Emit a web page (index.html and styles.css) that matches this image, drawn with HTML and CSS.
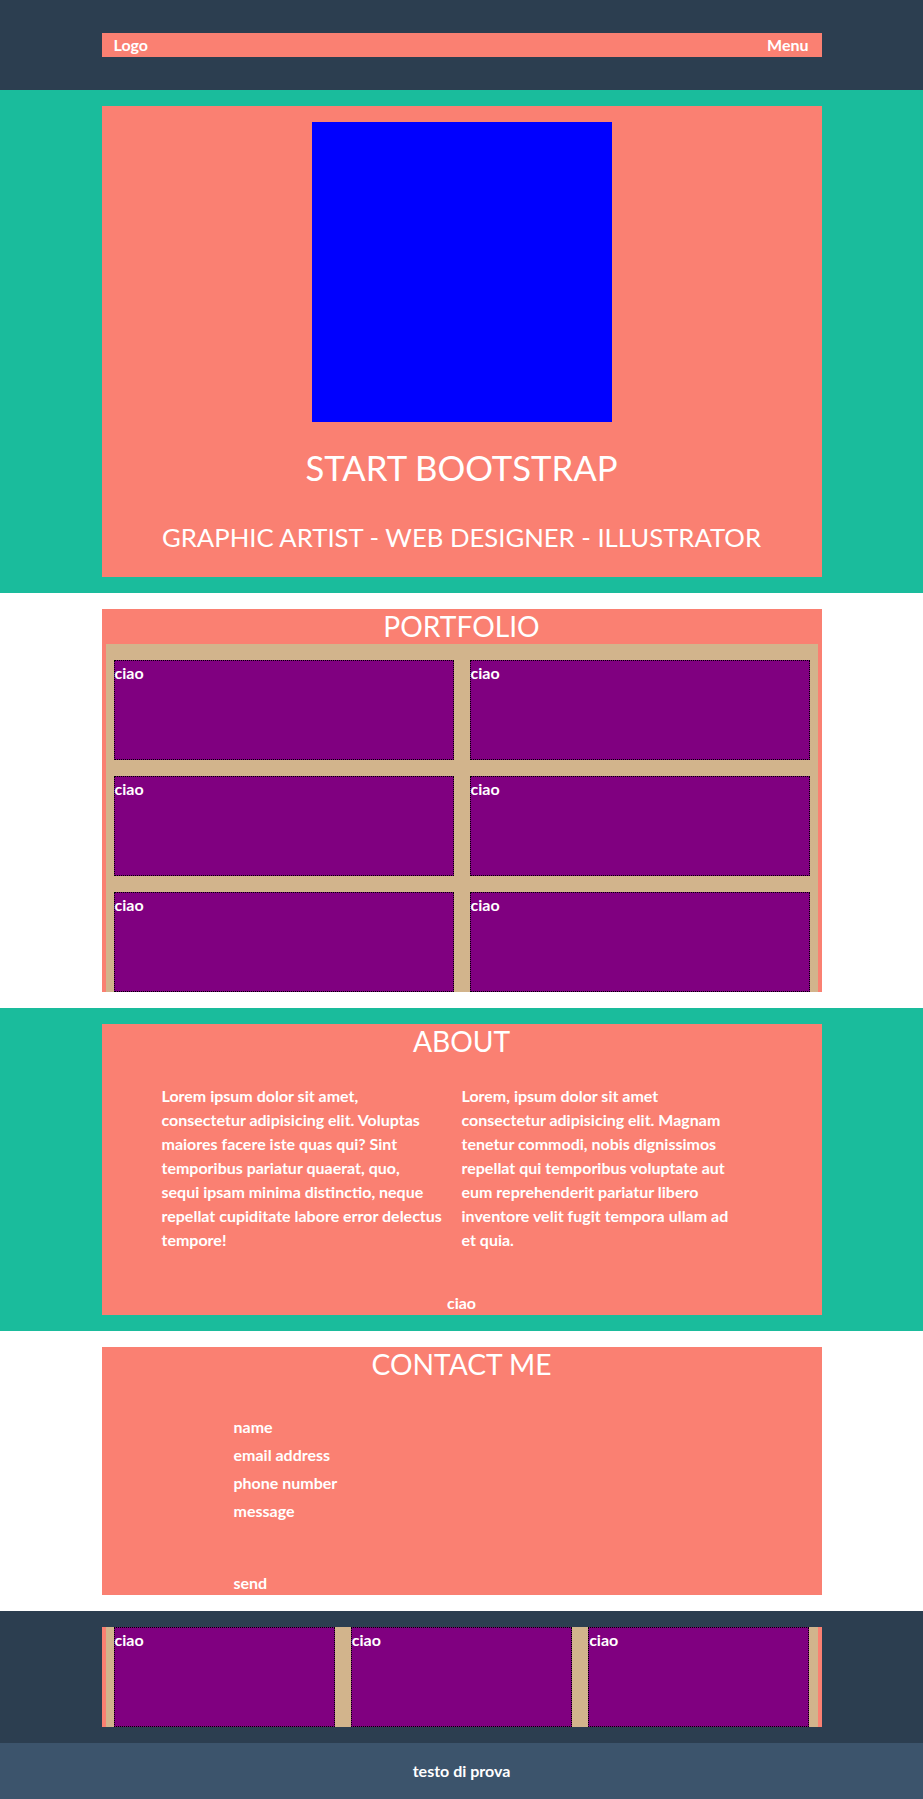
FILE: index.html
```html
<!DOCTYPE html>
<html lang="it">
<head>
<meta charset="utf-8">
<title>Start Bootstrap</title>
<link rel="stylesheet" href="styles.css">
</head>
<body>
<header class="site-header">
  <div class="container">
    <nav class="navbar">
      <span class="brand">Logo</span>
      <span class="menu">Menu</span>
    </nav>
  </div>
</header>

<section class="band band-teal">
  <div class="container box hero-box">
    <div class="avatar"></div>
    <h1 class="hero-title">START BOOTSTRAP</h1>
    <h2 class="hero-sub">GRAPHIC ARTIST - WEB DESIGNER - ILLUSTRATOR</h2>
  </div>
</section>

<section class="band band-white">
  <div class="container box">
    <h2 class="section-title">PORTFOLIO</h2>
    <div class="tiles tiles-2">
      <div class="tile">ciao</div>
      <div class="tile">ciao</div>
      <div class="tile">ciao</div>
      <div class="tile">ciao</div>
      <div class="tile">ciao</div>
      <div class="tile">ciao</div>
    </div>
  </div>
</section>

<section class="band band-teal">
  <div class="container box about">
    <h2 class="section-title">ABOUT</h2>
    <div class="about-cols">
      <p>Lorem ipsum dolor sit amet,<br>consectetur adipisicing elit. Voluptas<br>maiores facere iste quas qui? Sint<br>temporibus pariatur quaerat, quo,<br>sequi ipsam minima distinctio, neque<br>repellat cupiditate labore error delectus<br>tempore!</p>
      <p>Lorem, ipsum dolor sit amet<br>consectetur adipisicing elit. Magnam<br>tenetur commodi, nobis dignissimos<br>repellat qui temporibus voluptate aut<br>eum reprehenderit pariatur libero<br>inventore velit fugit tempora ullam ad<br>et quia.</p>
    </div>
    <p class="about-foot">ciao</p>
  </div>
</section>

<section class="band band-white">
  <div class="container box contact">
    <h2 class="section-title">CONTACT ME</h2>
    <form class="contact-form">
      <div class="field">name</div>
      <div class="field">email address</div>
      <div class="field">phone number</div>
      <div class="field">message</div>
      <div class="send">send</div>
    </form>
  </div>
</section>

<footer class="site-footer">
  <div class="container box">
    <div class="tiles tiles-3">
      <div class="tile">ciao</div>
      <div class="tile">ciao</div>
      <div class="tile">ciao</div>
    </div>
  </div>
</footer>
<div class="copyright">testo di prova</div>
</body>
</html>
```

FILE: styles.css
```css
* { box-sizing: border-box; }

body {
  margin: 0;
  font-family: Lato, "Open Sans", "Liberation Sans", sans-serif;
  font-weight: 700;
  font-size: 16px;
  line-height: 24px;
  color: #fff;
  background: #fff;
}

.container {
  width: 720px;
  margin: 0 auto;
}

.box { background: salmon; }

/* header */
.site-header {
  background: #2c3e50;
  padding: 33px 0;
}
.navbar {
  background: salmon;
  height: 24px;
  display: flex;
  justify-content: space-between;
  align-items: center;
  padding: 0 13px 0 12px;
}

/* bands */
.band { padding: 16px 0; }
.band-teal { background: #1abc9c; }
.band-white { background: #fff; }

/* hero */
.hero-box {
  padding: 16px 0 25px;
  text-align: center;
}
.avatar {
  width: 300px;
  height: 300px;
  background: blue;
  margin: 0 auto;
}
.hero-title {
  margin: 24px 0 0;
  font-size: 34.7px;
  line-height: 44px;
  font-weight: 400;
}
.hero-sub {
  margin: 32px 0 0;
  font-size: 25.7px;
  line-height: 30px;
  font-weight: 400;
}

.section-title {
  margin: 0;
  font-size: 28.2px;
  line-height: 35px;
  font-weight: 400;
  text-align: center;
}

/* tiles */
.tiles {
  background: tan;
  margin: 0 4px;
  display: grid;
  gap: 16px;
  padding: 16px 8px 0;
}
.tiles-2 { grid-template-columns: 1fr 1fr; }
.tiles-3 {
  grid-template-columns: 1fr 1fr 1fr;
  padding-top: 0;
}
.tile {
  height: 100px;
  background: purple;
  border: 1px dotted #000;
}

/* about */
.about-cols {
  margin: 25px 60px 0;
  display: grid;
  grid-template-columns: 300px 300px;
}
.about-cols p {
  margin: 0;
  white-space: nowrap;
}
.about-foot {
  margin: 39px 0 0;
  text-align: center;
}

/* contact */
.contact-form {
  margin: 33px 0 0;
  padding-left: 132px;
  display: flex;
  flex-direction: column;
  gap: 4px;
}
.send { margin-top: 44px; }

/* footer */
.site-footer {
  background: #2c3e50;
  padding: 16px 0;
}
.copyright {
  background: #3c546c;
  height: 56px;
  line-height: 56px;
  text-align: center;
}
```
